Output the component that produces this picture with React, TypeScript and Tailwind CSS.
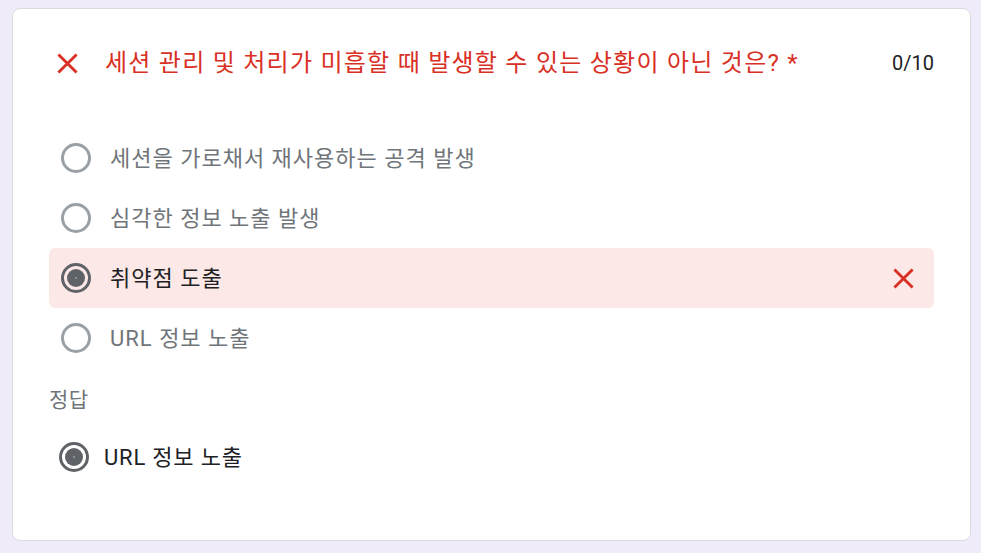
const font = { fontFamily: '"Roboto", "Noto Sans CJK KR", sans-serif' };

function Cross({ className }: { className?: string }) {
  return (
    <svg viewBox="0 0 22 22" className={className} fill="none" stroke="#d93025" strokeWidth="3">
      <path d="M1.5 1.5L20.5 20.5M20.5 1.5L1.5 20.5" />
    </svg>
  );
}

function Radio({ checked, muted }: { checked?: boolean; muted?: boolean }) {
  return (
    <span
      className={`flex h-[30px] w-[30px] shrink-0 items-center justify-center rounded-full border-[3px] ${
        muted ? 'border-[#9aa0a6]' : 'border-[#5f6368]'
      }`}
    >
      {checked && (
        <span className="flex h-[18px] w-[18px] items-center justify-center rounded-full bg-[#5f6368]">
          <span className="h-[2px] w-[2px] rounded-full bg-[#9aa0a6]" />
        </span>
      )}
    </span>
  );
}

const options = [
  { label: '세션을 가로채서 재사용하는 공격 발생' },
  { label: '심각한 정보 노출 발생' },
  { label: '취약점 도출', picked: true },
  { label: 'URL 정보 노출' },
];

export default function App() {
  return (
    <div className="h-[553px] w-[981px] bg-[#f0ebf8] pl-[12px] pt-[8px]" style={font}>
      <div className="h-[533px] w-[959px] rounded-lg border border-[#dadce0] bg-white px-[36px]">
        <div className="flex items-center pt-[42px]">
          <Cross className="ml-[8px] h-[21px] w-[21px] shrink-0" />
          <p className="ml-[27px] whitespace-nowrap text-[24px] leading-[24px] tracking-[1.25px] text-[#d93025]">
            세션 관리 및 처리가 미흡할 때 발생할 수 있는 상황이 아닌 것은? *
          </p>
          <span className="ml-auto text-[20px] leading-[24px] text-[#202124]">0/10</span>
        </div>

        <div className="mt-[53px] flex flex-col">
          {options.map((o) => (
            <div
              key={o.label}
              className={`flex h-[60px] items-center rounded-md pl-[12px] pr-[20px] ${o.picked ? 'bg-[#fce8e6]' : ''}`}
            >
              <Radio checked={o.picked} muted={!o.picked} />
              <span
                className={`ml-[19px] text-[22px] tracking-[1px] ${o.picked ? 'text-[#202124]' : 'text-[#70757a]'}`}
              >
                {o.label}
              </span>
              {o.picked && <Cross className="ml-auto h-[21px] w-[21px]" />}
            </div>
          ))}
        </div>

        <p className="mt-[20px] text-[21px] leading-[24px] tracking-[0.4px] text-[#70757a]">정답</p>
        <div className="mt-[15px] flex h-[60px] items-center pl-[10px]">
          <Radio checked />
          <span className="ml-[15px] text-[22px] tracking-[0.8px] text-[#202124]">URL 정보 노출</span>
        </div>
      </div>
    </div>
  );
}
